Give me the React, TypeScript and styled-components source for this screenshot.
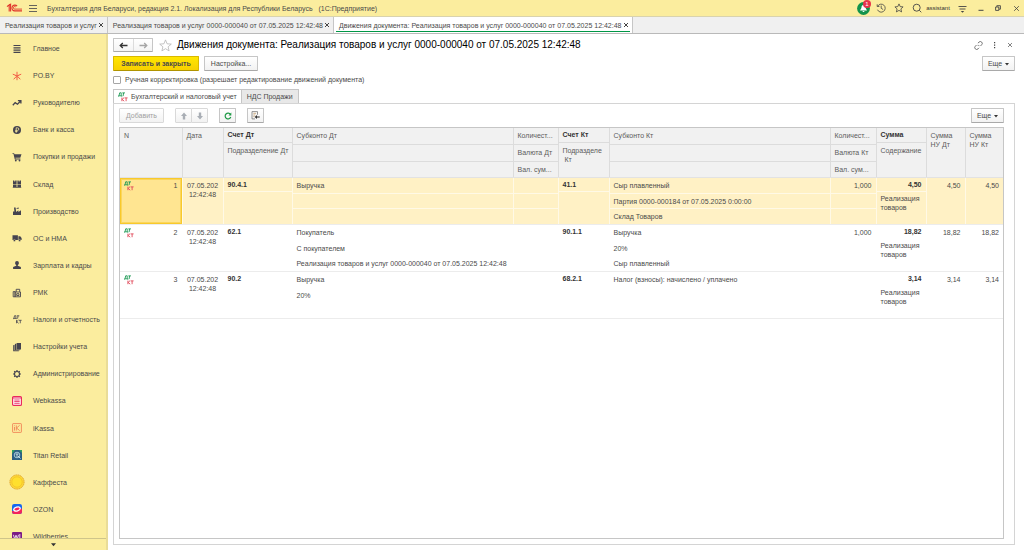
import React from "react";
import styled, { createGlobalStyle, css } from "styled-components";

const yellow = "#fbed9e";
const ink = "#4a4a4a";
const line = "#c6c6c6";

const GlobalStyle = createGlobalStyle`
  *, *::before, *::after { box-sizing: border-box; }
  body { margin: 0; background: #fff; }
  body, button, input, table {
    font-family: "Liberation Sans", Arial, sans-serif;
    font-size: 7px;
    line-height: 9px;
    color: ${ink};
  }
  button { padding: 0; border: 0; background: none; cursor: pointer; }
  h1, ul { margin: 0; padding: 0; }
  svg { display: block; flex: none; }
`;

/* ---------- Frame ---------- */

const Page = styled.div`
  display: flex;
  flex-direction: column;
  height: 100vh;
  overflow: hidden;
`;

const TitleBar = styled.header`
  display: flex;
  align-items: center;
  flex: none;
  height: 17px;
  padding-left: 6px;
  background: ${yellow};
  border-bottom: 1px solid #d9d3ae;
`;

const AppName = styled.div`
  flex: 1;
  padding-left: 4px;
  white-space: pre;
`;

const TitleTools = styled.div`
  display: flex;
  align-items: center;
`;

const IconButton = styled.button<{ $w?: number }>`
  display: flex;
  align-items: center;
  justify-content: center;
  width: ${(p) => p.$w ?? 18}px;
  height: 14px;
`;

const BellButton = styled(IconButton)`
  position: relative;
`;

const Badge = styled.span`
  position: absolute;
  top: -1px;
  right: 1px;
  width: 8px;
  height: 8px;
  border-radius: 4px;
  background: #e8334a;
  color: #fff;
  font-size: 6px;
  line-height: 8px;
  text-align: center;
`;

const UserButton = styled.button`
  width: 24px;
  font-size: 6px;
  color: #333;
`;

const WindowTabs = styled.div`
  display: flex;
  flex: none;
  height: 17px;
  background: #f0f0f0;
  border-bottom: 1px solid #b9b9b9;
`;

const WindowTab = styled.div<{ $active?: boolean }>`
  display: flex;
  align-items: center;
  position: relative;
  height: 16px;
  padding: 0 2px 0 5px;
  border-right: 1px solid ${line};
  ${(p) =>
    p.$active &&
    css`
      background: #fff;
      &::after {
        content: "";
        position: absolute;
        left: 2px;
        right: 2px;
        bottom: 1px;
        height: 1px;
        background: #009646;
      }
    `}
`;

const TabLabel = styled.button`
  white-space: nowrap;
`;

const TabClose = styled.button`
  display: flex;
  align-items: center;
  justify-content: center;
  width: 8px;
  height: 9px;
`;

const Body = styled.div`
  display: grid;
  grid-template-columns: 108px minmax(0, 1fr);
  flex: 1;
  min-height: 0;
`;

/* ---------- Section panel ---------- */

const Sidebar = styled.nav`
  position: relative;
  min-height: 0;
  overflow: hidden;
  background: ${yellow};
  border-right: 2px solid #e9dc98;
`;

const SectionList = styled.ul`
  display: flex;
  flex-direction: column;
  height: 100%;
  padding-top: 1px;
  list-style: none;
`;

const SectionItem = styled.li`
  display: flex;
  flex: 1 0 27px;
`;

const SectionLink = styled.a`
  display: grid;
  grid-template-columns: 16px 1fr;
  align-items: center;
  gap: 8px;
  flex: 1;
  padding-left: 9px;
  color: ${ink};
  text-decoration: none;
  white-space: nowrap;
  svg { justify-self: center; }
`;

const ScrollDown = styled.button`
  position: absolute;
  left: 0;
  right: 0;
  bottom: 0;
  display: flex;
  align-items: center;
  justify-content: center;
  height: 12px;
  background: ${yellow};
  border-top: 1px solid #cfc58a;
`;

/* ---------- Form ---------- */

const Form = styled.main`
  display: flex;
  flex-direction: column;
  min-width: 0;
  min-height: 0;
  padding: 4px 9px 5px 5px;
`;

const HeadRow = styled.div`
  display: flex;
  align-items: center;
  flex: none;
  height: 14px;
`;

const NavGroup = styled.div`
  display: flex;
  height: 14px;
  border: 1px solid ${line};
  border-bottom-color: #a9a9a9;
  border-radius: 1px;
  background: linear-gradient(#fff, #f4f4f4);
`;

const NavButton = styled.button`
  display: flex;
  align-items: center;
  justify-content: center;
  width: 19px;
  & + & { border-left: 1px solid #dcdcdc; }
`;

const FormTitle = styled.h1`
  flex: 1;
  font-size: 10px;
  line-height: 14px;
  font-weight: 400;
  color: #000;
`;

const CommandRow = styled.div`
  display: flex;
  align-items: center;
  flex: none;
  gap: 5px;
  margin-top: 4px;
`;

const Spacer = styled.span`
  flex: 1;
`;

const Button = styled.button<{ $primary?: boolean; $w: number }>`
  display: flex;
  align-items: center;
  justify-content: center;
  gap: 3px;
  width: ${(p) => p.$w}px;
  height: 15px;
  border: 1px solid ${line};
  border-bottom-color: #a9a9a9;
  border-radius: 1px;
  background: linear-gradient(#fff, #f2f2f2);
  white-space: nowrap;
  &:disabled { color: #a0a0a0; border-color: #d9d9d9; }
  ${(p) =>
    p.$primary &&
    css`
      font-weight: 700;
      background: linear-gradient(#ffe600, #f7d000);
      border-color: #d9b800;
      border-bottom-color: #b09400;
    `}
`;

const CheckRow = styled.label`
  display: flex;
  align-items: center;
  flex: none;
  gap: 4px;
  height: 9px;
  margin-top: 4px;
`;

const CheckBox = styled.input`
  appearance: none;
  width: 8px;
  height: 8px;
  margin: 0;
  border: 1px solid #a6a6a6;
  border-radius: 1px;
  background: #fff;
`;

const PageTabs = styled.div`
  display: flex;
  flex: none;
  height: 15px;
  margin: 5px 0 -1px;
`;

const PageTab = styled.button<{ $active?: boolean }>`
  display: flex;
  align-items: center;
  gap: 3px;
  padding: 0 4px;
  border: 1px solid ${line};
  background: ${(p) => (p.$active ? "#fff" : "#e8e8e8")};
  border-bottom-color: ${(p) => (p.$active ? "#fff" : line)};
  & + & { margin-left: -1px; padding: 0 5px; }
`;

const TabPanel = styled.section`
  display: flex;
  flex-direction: column;
  flex: 1;
  min-height: 0;
  padding: 4px 10px 5px 5px;
  border: 1px solid #d4d4d4;
`;

const Toolbar = styled.div`
  display: flex;
  align-items: center;
  flex: none;
  gap: 11px;
`;

const ButtonPair = styled.div`
  display: flex;
  & > * + * { margin-left: -1px; }
`;

/* ---------- Postings table ---------- */

const TableFrame = styled.div`
  flex: 1;
  min-height: 0;
  margin-top: 4px;
  overflow: hidden;
  border: 1px solid ${line};
`;

const Table = styled.table`
  width: 100%;
  table-layout: fixed;
  border-collapse: collapse;
  td, th {
    padding: 0;
    vertical-align: top;
    text-align: left;
    font-weight: 400;
  }
`;

const HeadCell = styled.th`
  height: 49px;
  background: #f1f1f1;
  border-right: 1px solid #dcdcdc;
  border-bottom: 1px solid #e2e2e2;
  color: #5c5c5c;
  &:last-child { border-right: 0; }
`;

const Row = styled.tr<{ $selected?: boolean }>`
  td {
    border-bottom: 1px solid #ececec;
    background: ${(p) => (p.$selected ? "#fff1c5" : "#fff")};
    border-right: 1px solid ${(p) => (p.$selected ? "#fff9e6" : "#fff")};
  }
  td:last-child { border-right: 0; }
  --rule: ${(p) => (p.$selected ? "#fff9e6" : "transparent")};
`;

type LineKind = "first" | "middle" | "last" | "short" | "rest";
const headHeights = { first: 17, middle: 17, last: 15, short: 15, rest: 34 };
const bodyHeights = { first: 16, middle: 15, last: 15, short: 14, rest: 32 };

const Line = styled.div<{ $kind: LineKind; $head?: boolean; $align?: string; $bold?: boolean }>`
  height: ${(p) => (p.$head ? headHeights : bodyHeights)[p.$kind]}px;
  padding: ${(p) => (p.$kind === "short" || (p.$kind === "rest" && !p.$head) ? 2 : 3)}px
    ${(p) => (p.$align ? 4 : 0)}px 0 4px;
  border-bottom: 1px solid ${(p) => (p.$head ? "#dcdcdc" : "var(--rule)")};
  text-align: ${(p) => p.$align ?? "left"};
  font-weight: ${(p) => (p.$bold ? 700 : 400)};
  color: ${(p) => (p.$bold ? "#333" : "inherit")};
  white-space: pre;
  &:last-child { border-bottom: 0; }
`;

const Block = styled.div<{ $align?: string }>`
  padding: 3px 4px 0;
  text-align: ${(p) => p.$align ?? "left"};
  white-space: pre;
`;

const NumberCell = styled.div<{ $selected?: boolean }>`
  display: flex;
  justify-content: space-between;
  height: 46px;
  padding: 3px 4px 0;
  ${(p) =>
    p.$selected &&
    css`
      padding: 2px 3px 0;
      border: 1px solid #f8c92c;
      outline: 1px solid #fbd65c;
      outline-offset: -2px;
      background: #ffe591;
    `}
`;

/* ---------- Drawings ---------- */

const Cross = ({ size = 6, width = 1, color = "#444" }) => (
  <svg width={size} height={size} viewBox="0 0 6 6" stroke={color} strokeWidth={width} aria-hidden>
    <path d="M1 1 5 5M5 1 1 5" />
  </svg>
);

const Caret = ({ size = 4 }) => (
  <svg width={size} height={size} viewBox="0 0 4 4" fill="#333" aria-hidden>
    <path d="M0 1h4L2 3.4z" />
  </svg>
);

const Arrow = ({ dir, color, size = 9 }: { dir: number; color: string; size?: number }) => (
  <svg width={size} height={size} viewBox="0 0 9 9" fill="none" stroke={color} strokeWidth="1.3" aria-hidden>
    <path d="M8.5 4.5H1.4M3.8 2 1.2 4.5 3.8 7" transform={`rotate(${dir} 4.5 4.5)`} />
  </svg>
);

const FatArrow = ({ dir }: { dir: number }) => (
  <svg width="8" height="8" viewBox="0 0 8 8" fill="#a9aeb5" aria-hidden>
    <path d="M4 .5 7 4H5.2v3.5H2.8V4H1z" transform={`rotate(${dir} 4 4)`} />
  </svg>
);

const DtKt = ({ top = "#1f9a56", bottom = "#e04858", size = 10 }) => (
  <svg width={size} height={size} viewBox="0 0 10 10" fill="none" strokeWidth=".9" aria-hidden>
    <path d="M.4 4.6V3.8h3.4v.8M1 3.8 1.7.8h1.500v3M4.300.9h2.700M5.600.9l-.5 3.200" stroke={top} />
    <path d="M3.900 5.600v3.600M6.100 5.600 4.200 7.400l2 1.800M6.600 5.900h3M8.100 5.900v3.300" stroke={bottom} />
  </svg>
);

const Logo = () => (
  <svg width="17" height="10" viewBox="0 0 17 10" fill="none" stroke="#e0352b" aria-hidden>
    <path d="M1 3.6 3.2 1.8V8.6M4.6 8.6V1.2L1.6 3" strokeWidth="1.1" />
    <path d="M11.1 3.2A2.9 2.9 0 1 0 8.9 7.9H16" strokeWidth="1.1" />
    <path d="M9.8 4.1A1.3 1.3 0 1 0 8.9 6.1H16" strokeWidth=".9" />
  </svg>
);

const g = "#45444f";

const sectionIcons: Record<string, React.ReactNode> = {
  main: <path d="M1.500 1.500h7M1.500 3.800h7M1.500 6.100h7M1.500 8.400h7" stroke={g} strokeWidth="1.200" />,
  po: (
    <path d="M5 .8v3M5 6.2v3M.8 3.2l3 1.2M6.2 4.4l3-1.2M1.7 8.3l2.2-2.4M8.3 8.3 6.1 5.9M3.6 4.4h2.8L5 6.4z" stroke="#f0503c" strokeWidth=".9" fill="none" />
  ),
  trend: <path d="M.8 7.3 3.2 4.6l2.3 1.6L8.6 3M5.9 2.6h3v2.8" stroke={g} strokeWidth="1.3" fill="none" />,
  bank: (
    <>
      <circle cx="5" cy="5" r="4" fill={g} />
      <path d="M4.2 7.8V2.8h1.3a1.3 1.3 0 0 1 0 2.6H3.2M3.2 6.5h2.3" stroke={yellow} strokeWidth=".8" fill="none" />
    </>
  ),
  cart: (
    <>
      <path d="M.5 1.2h1.6l.4 1h7L8.3 5.7H3.4l.2.9h4.8v.8H2.8L1.5 2H.5z" fill={g} />
      <circle cx="3.8" cy="8.5" r=".9" fill={g} />
      <circle cx="7.5" cy="8.5" r=".9" fill={g} />
    </>
  ),
  store: <path d="M1 1.400h1.300v1.200h.9V1.400h1.400v3.500H1zM5.400 1.400h1.300v1.200h.9V1.400H9v3.500H5.400zM1 5.400h3.600v2.500H1zM5.400 5.400H9v2.500H5.400zM.8 8.300h8.400v.8H.8z" fill={g} />,
  plant: <path d="M1 9V5.500h1.400L2 1.400h1.600l.5 4.100V6l2.300-1.800V6L9 4.200V9zM4.600 2.300c.7-1 1.400-.2 2.200-.9v1.100c-.8.7-1.400 0-2.200.7z" fill={g} />,
  truck: (
    <>
      <path d="M.5 2.2h5.4v4.9H.5zM6.4 3.3h1.8L9.6 5v2.1H6.4z" fill={g} />
      <circle cx="2.4" cy="7.5" r="1.1" fill={g} stroke={yellow} strokeWidth=".4" />
      <circle cx="7.6" cy="7.5" r="1.1" fill={g} stroke={yellow} strokeWidth=".4" />
    </>
  ),
  person: <path d="M5 .9a1.900 1.900 0 0 1 1.900 2c0 1-.5 1.800-1.100 2.200v.6l3.100 1.200V9H1.100V6.900l3.100-1.200v-.6C3.600 4.700 3.100 3.900 3.100 2.900A1.900 1.900 0 0 1 5 .9z" fill={g} />,
  pos: (
    <path d="M1.200 3.600h1.900v5.200H1.200zM3.100 4h5.400v4.800H3.100zM4.200 3.900V1.300h3.500v2.600M4.700 5.700h2.300v1.800H4.700z" fill="none" stroke={g} strokeWidth=".9" />
  ),
  books: <path d="M1.200 3.200 2.600 2.700v5.800l4.200.1v.7H1.200zM3 1.900l1.300-.4v6.200l3.600.1v.5H3zM4.700.9H9v6.500H4.700z" fill={g} />,
  gear: (
    <>
      <circle cx="5" cy="5" r="2.500" fill="none" stroke={g} strokeWidth="1.100" />
      <path d="M5 1v1.400M5 7.600V9M1 5h1.400M7.600 5H9M2.200 2.200l1 1M6.800 6.800l1 1M7.800 2.200l-1 1M3.200 6.800l-1 1" stroke={g} strokeWidth="1.200" />
    </>
  ),
  webkassa: (
    <>
      <rect x=".6" y=".6" width="8.800" height="8.800" rx="1" fill="#fff" stroke="#ea2a5c" strokeWidth="1.200" />
      <path d="M.6 2h8.800M2.300 4h5.400M2.300 5.600h5.400M2.300 7.300h5.400" stroke="#ea2a5c" strokeWidth=".9" />
    </>
  ),
  ikassa: (
    <>
      <rect x=".6" y=".6" width="8.800" height="8.800" rx=".6" fill="none" stroke="#f0764c" strokeWidth=".8" />
      <path d="M2.500 4v3.600M2.500 2.400v.8M4.300 2.400v5.200M7.600 2.400 4.500 5l3.200 2.600" stroke="#f0764c" strokeWidth=".8" fill="none" />
    </>
  ),
  titan: (
    <>
      <rect width="10" height="10" fill="#2a5f83" />
      <path d="M0 0h3L0 4zM10 0v3L7 0z" fill="#2fa060" />
      <circle cx="5" cy="5" r="2.800" fill="none" stroke="#bfe3ea" strokeWidth=".8" />
      <path d="M3.500 4h3M5 4v3M6 6l2.500 2.500" stroke="#e9f6f8" strokeWidth=".8" />
    </>
  ),
  ozon: (
    <>
      <rect width="10" height="10" rx="2.200" fill="#1668f0" />
      <path d="M0 7.200 10 4.600v3.200A2.200 2.200 0 0 1 7.800 10H2.200A2.200 2.200 0 0 1 0 7.800z" fill="#f3245c" />
      <ellipse cx="5" cy="5" rx="3.300" ry="1.900" transform="rotate(-18 5 5)" fill="#f3245c" stroke="#fff" strokeWidth="1.300" />
    </>
  ),
  wb: (
    <>
      <rect width="10" height="10" rx="1" fill="#7b1a85" />
      <path d="M1.400 2.800 2.700 7 4 3.200 5.300 7l1.200-4.200M7.800 2v5" stroke="#fff" strokeWidth=".8" fill="none" />
    </>
  ),
};

const SectionIcon = ({ name }: { name: string }) => {
  if (name === "dtkt") return <DtKt top={g} bottom={g} size={9} />;
  if (name === "coin")
    return (
      <svg width="16" height="16" viewBox="0 0 16 16" aria-hidden>
        <circle cx="8" cy="8" r="7.100" fill="#fdd835" stroke="#e2a72a" strokeWidth="1" strokeDasharray="1.400 .5" />
        <circle cx="8" cy="8" r="5.200" fill="#ffe02e" stroke="#efb92a" strokeWidth=".6" />
      </svg>
    );
  return (
    <svg width="10" height="10" viewBox="0 0 10 10" aria-hidden>
      {sectionIcons[name]}
    </svg>
  );
};

/* ---------- Data ---------- */

const sections: [string, string][] = [
  ["main", "Главное"],
  ["po", "PO.BY"],
  ["trend", "Руководителю"],
  ["bank", "Банк и касса"],
  ["cart", "Покупки и продажи"],
  ["store", "Склад"],
  ["plant", "Производство"],
  ["truck", "ОС и НМА"],
  ["person", "Зарплата и кадры"],
  ["pos", "РМК"],
  ["dtkt", "Налоги и отчетность"],
  ["books", "Настройки учета"],
  ["gear", "Администрирование"],
  ["webkassa", "Webkassa"],
  ["ikassa", "iKassa"],
  ["titan", "Titan Retail"],
  ["coin", "Каффеста"],
  ["ozon", "OZON"],
  ["wb", "Wildberries"],
];

const sale = "Реализация товаров и услуг 0000-000040 от 07.05.2025 12:42:48";

const windowTabs = ["Реализация товаров и услуг", sale, `Движения документа: ${sale}`];

const postings = [
  {
    debit: "90.4.1",
    debitSub: ["Выручка", "", ""],
    credit: "41.1",
    creditSub: ["Сыр плавленный", "Партия 0000-000184 от 07.05.2025 0:00:00", "Склад Товаров"],
    qty: "1,000",
    sum: "4,50",
  },
  {
    debit: "62.1",
    debitSub: ["Покупатель", "С покупателем", sale],
    credit: "90.1.1",
    creditSub: ["Выручка", "20%", "Сыр плавленный"],
    qty: "1,000",
    sum: "18,82",
  },
  {
    debit: "90.2",
    debitSub: ["Выручка", "20%", ""],
    credit: "68.2.1",
    creditSub: ["Налог (взносы): начислено / уплачено", "", ""],
    qty: "",
    sum: "3,14",
  },
];

const columnWidths = [62, 41, 69, 0, 45, 51, 0, 46, 50, 39, 38];

const tripleKinds: LineKind[] = ["first", "middle", "last"];

const Triple = ({ lines, head, align }: { lines: string[]; head?: boolean; align?: string }) => (
  <>
    {lines.map((text, i) => (
      <Line key={i} $kind={tripleKinds[i]} $head={head} $align={align}>
        {text}
      </Line>
    ))}
  </>
);

const Double = ({ top, rest, head, align }: { top: string; rest: string; head?: boolean; align?: string }) => (
  <>
    <Line $kind="short" $head={head} $align={align} $bold>
      {top}
    </Line>
    <Line $kind="rest" $head={head}>
      {rest}
    </Line>
  </>
);

const Postings = () => (
  <TableFrame>
    <Table>
      <colgroup>
        {columnWidths.map((w, i) => (
          <col key={i} style={w ? { width: w } : undefined} />
        ))}
      </colgroup>
      <thead>
        <tr>
          <HeadCell scope="col"><Block>N</Block></HeadCell>
          <HeadCell scope="col"><Block>Дата</Block></HeadCell>
          <HeadCell scope="col"><Double head top="Счет Дт" rest="Подразделение Дт" /></HeadCell>
          <HeadCell scope="col"><Triple head lines={["Субконто Дт", "", ""]} /></HeadCell>
          <HeadCell scope="col"><Triple head lines={["Количест...", "Валюта Дт", "Вал. сум..."]} /></HeadCell>
          <HeadCell scope="col"><Double head top="Счет Кт" rest={"Подразделе\n Кт"} /></HeadCell>
          <HeadCell scope="col"><Triple head lines={["Субконто Кт", "", ""]} /></HeadCell>
          <HeadCell scope="col"><Triple head lines={["Количест...", "Валюта Кт", "Вал. сум..."]} /></HeadCell>
          <HeadCell scope="col"><Double head top="Сумма" rest="Содержание" /></HeadCell>
          <HeadCell scope="col"><Block>{"Сумма\nНУ Дт"}</Block></HeadCell>
          <HeadCell scope="col"><Block>{"Сумма\nНУ Кт"}</Block></HeadCell>
        </tr>
      </thead>
      <tbody>
        {postings.map((p, i) => (
          <Row key={i} $selected={i === 0}>
            <td>
              <NumberCell $selected={i === 0}>
                <DtKt />
                <span>{i + 1}</span>
              </NumberCell>
            </td>
            <td><Block $align="center">{"07.05.202\n12:42:48"}</Block></td>
            <td><Double top={p.debit} rest="" /></td>
            <td><Triple lines={p.debitSub} /></td>
            <td><Triple lines={["", "", ""]} /></td>
            <td><Double top={p.credit} rest="" /></td>
            <td><Triple lines={p.creditSub} /></td>
            <td><Triple align="right" lines={[p.qty, "", ""]} /></td>
            <td><Double align="right" top={p.sum} rest={"Реализация\nтоваров"} /></td>
            <td><Block $align="right">{p.sum}</Block></td>
            <td><Block $align="right">{p.sum}</Block></td>
          </Row>
        ))}
      </tbody>
    </Table>
  </TableFrame>
);

export default function App() {
  return (
    <Page>
      <GlobalStyle />
      <TitleBar>
        <Logo />
        <IconButton $w={20} aria-label="Меню">
          <svg width="8" height="8" viewBox="0 0 8 8" stroke="#555" aria-hidden>
            <path d="M0 1.500h8M0 4.500h8M0 7.500h8" strokeWidth=".9" />
          </svg>
        </IconButton>
        <AppName>
          Бухгалтерия для Беларуси, редакция 2.1. Локализация для Республики Беларусь{"   "}(1С:Предприятие)
        </AppName>
        <TitleTools>
          <BellButton aria-label="Уведомления">
            <svg width="13" height="13" viewBox="0 0 13 13" aria-hidden>
              <circle cx="6.500" cy="6.500" r="6.400" fill="#12934b" />
              <path d="M6.500 3c1.600 0 2 1.300 2.100 3l1.400 2.500H3L4.400 6c.1-1.700.5-3 2.100-3zM5.500 9h2a1 1 0 0 1-2 0z" fill="#fff" />
            </svg>
            <Badge>1</Badge>
          </BellButton>
          <IconButton aria-label="История">
            <svg width="10" height="10" viewBox="0 0 10 10" fill="none" stroke="#444" strokeWidth=".8" aria-hidden>
              <path d="M1.700 3.200A4 4 0 1 1 1.500 6.700M1.200 1.300v2.200h2.200M5.200 2.600v2.700l1.900 1.200" />
            </svg>
          </IconButton>
          <IconButton aria-label="Избранное">
            <svg width="10" height="10" viewBox="0 0 10 10" fill="none" stroke="#444" strokeWidth=".8" aria-hidden>
              <path d="m5 .9 1.200 2.700 2.900.3L6.900 5.900l.7 3L5 7.400l-2.600 1.500.7-3L.9 3.900l2.900-.3z" />
            </svg>
          </IconButton>
          <IconButton aria-label="Поиск">
            <svg width="10" height="10" viewBox="0 0 10 10" fill="none" stroke="#444" strokeWidth=".9" aria-hidden>
              <circle cx="4.700" cy="4.700" r="3.500" />
              <path d="m7.300 7.300 2 2" />
            </svg>
          </IconButton>
          <UserButton>assistant</UserButton>
          <IconButton $w={24} aria-label="Настройки">
            <svg width="9" height="9" viewBox="0 0 9 9" aria-hidden>
              <path d="M.5 2.500h8M1.500 5h6" stroke="#444" strokeWidth=".9" />
              <path d="M2.800 7h3.400L4.500 8.700z" fill="#444" />
            </svg>
          </IconButton>
          <IconButton $w={14} aria-label="Свернуть">
            <svg width="6" height="6" viewBox="0 0 6 6" aria-hidden>
              <path d="M.5 5.300h5" stroke="#444" />
            </svg>
          </IconButton>
          <IconButton $w={20} aria-label="Восстановить">
            <svg width="6" height="6" viewBox="0 0 6 6" fill="none" stroke="#444" aria-hidden>
              <path d="M.6 2h3.200v3.400H.6zM1.800 1.800V.7h3.600v3.500H4" strokeWidth=".9" />
            </svg>
          </IconButton>
          <IconButton $w={16} aria-label="Закрыть">
            <Cross size={7} width={0.7} />
          </IconButton>
        </TitleTools>
      </TitleBar>

      <WindowTabs>
        {windowTabs.map((label, i) => (
          <WindowTab key={label} $active={i === 2}>
            <TabLabel>{label}</TabLabel>
            <TabClose aria-label="Закрыть вкладку">
              <Cross />
            </TabClose>
          </WindowTab>
        ))}
      </WindowTabs>

      <Body>
        <Sidebar>
          <SectionList>
            {sections.map(([icon, label]) => (
              <SectionItem key={label}>
                <SectionLink href="#">
                  <SectionIcon name={icon} />
                  {label}
                </SectionLink>
              </SectionItem>
            ))}
          </SectionList>
          <ScrollDown aria-label="Прокрутить вниз">
            <Caret size={5} />
          </ScrollDown>
        </Sidebar>

        <Form>
          <HeadRow>
            <NavGroup>
              <NavButton aria-label="Назад"><Arrow dir={0} color="#333" /></NavButton>
              <NavButton aria-label="Вперед"><Arrow dir={180} color="#a5a5a5" /></NavButton>
            </NavGroup>
            <IconButton $w={24} aria-label="В избранное">
              <svg width="13" height="13" viewBox="0 0 13 13" fill="none" stroke="#b5b5b5" strokeWidth=".8" aria-hidden>
                <path d="m6.500.9 1.600 3.900 4.200.3-3.200 2.700 1 4.100-3.600-2.200-3.600 2.200 1-4.100L.7 5.100l4.200-.3z" />
              </svg>
            </IconButton>
            <FormTitle>Движения документа: {sale}</FormTitle>
            <IconButton $w={10} aria-label="Получить ссылку">
              <svg width="9" height="9" viewBox="0 0 9 9" fill="none" stroke="#666" strokeWidth=".9" aria-hidden>
                <path d="M3.900 2.200 5 1.100a1.700 1.700 0 0 1 2.700 2.600L6.500 5M4.700 5.100 3.900 4.300M5.100 6.800 4 7.900a1.700 1.700 0 0 1-2.700-2.600L2.500 4M4.300 3.900l.8.8" />
              </svg>
            </IconButton>
            <IconButton $w={22} aria-label="Дополнительно">
              <svg width="3" height="8" viewBox="0 0 3 8" fill="#444" aria-hidden>
                <path d="M1 1h1.200v1.300H1zM1 3.500h1.200v1.300H1zM1 6h1.200v1.300H1z" />
              </svg>
            </IconButton>
            <IconButton $w={10} aria-label="Закрыть форму">
              <Cross size={6} width={0.8} color="#666" />
            </IconButton>
          </HeadRow>

          <CommandRow>
            <Button $primary $w={86}>Записать и закрыть</Button>
            <Button $w={54}>Настройка...</Button>
            <Spacer />
            <Button $w={33}>Еще <Caret /></Button>
          </CommandRow>

          <CheckRow>
            <CheckBox type="checkbox" />
            Ручная корректировка (разрешает редактирование движений документа)
          </CheckRow>

          <PageTabs role="tablist">
            <PageTab $active role="tab" aria-selected="true">
              <DtKt />
              Бухгалтерский и налоговый учет
            </PageTab>
            <PageTab role="tab" aria-selected="false">НДС Продажи</PageTab>
          </PageTabs>

          <TabPanel>
            <Toolbar>
              <Button $w={45} disabled>Добавить</Button>
              <ButtonPair>
                <Button $w={17} disabled aria-label="Вверх"><FatArrow dir={0} /></Button>
                <Button $w={17} disabled aria-label="Вниз"><FatArrow dir={180} /></Button>
              </ButtonPair>
              <Button $w={17} aria-label="Обновить">
                <svg width="8" height="8" viewBox="0 0 8 8" aria-hidden>
                  <path d="M6.500 2.400A2.900 2.900 0 1 0 6.800 5" fill="none" stroke="#1f9a46" strokeWidth="1.200" />
                  <path d="M7.300.6v2.900H4.500z" fill="#1f9a46" />
                </svg>
              </Button>
              <Button $w={17} aria-label="Перейти к документу">
                <svg width="9" height="9" viewBox="0 0 9 9" fill="none" aria-hidden>
                  <path d="M6.500 3.800V.6H1v7.300h3" stroke="#777" strokeWidth=".8" />
                  <path d="M2.300 2.300h2.800M2.300 4h2M2.300 5.600h1.200" stroke="#c09a6a" strokeWidth=".8" />
                  <path d="M8.700 6H5.200" stroke="#333" strokeWidth="1.100" />
                  <path d="M6 4v4L3.600 6z" fill="#333" />
                </svg>
              </Button>
              <Spacer />
              <Button $w={33}>Еще <Caret /></Button>
            </Toolbar>
            <Postings />
          </TabPanel>
        </Form>
      </Body>
    </Page>
  );
}
